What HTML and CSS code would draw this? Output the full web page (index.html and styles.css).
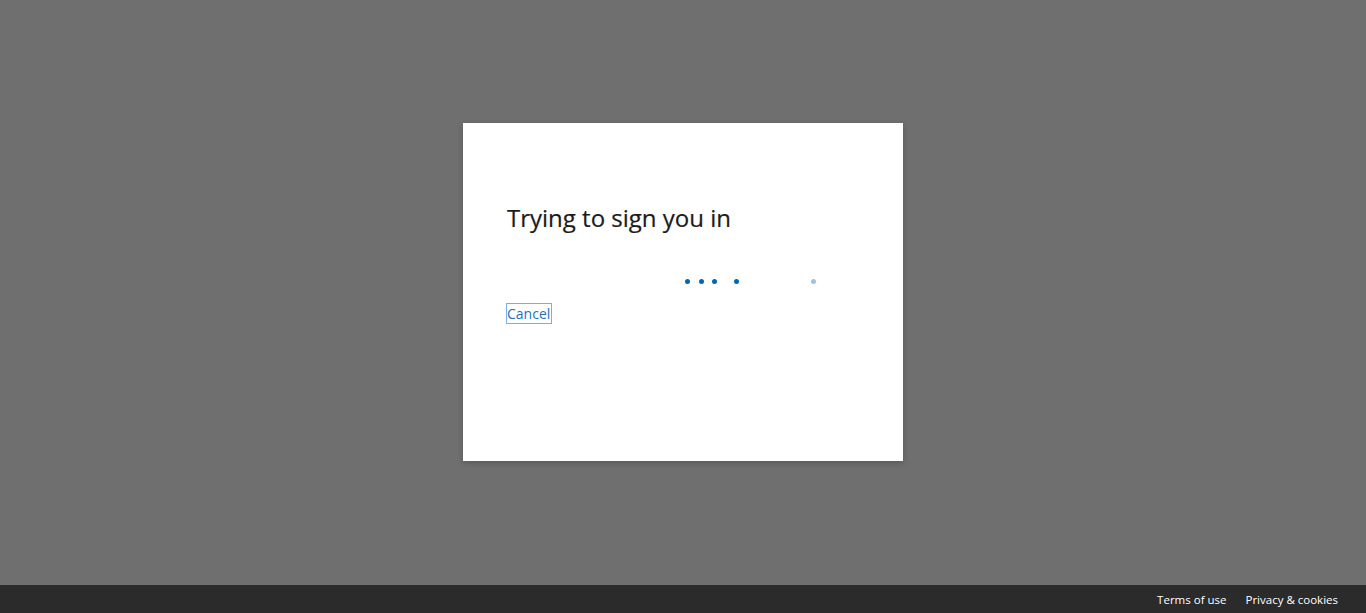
FILE: index.html
```html
<!DOCTYPE html>
<html lang="en">
<head>
<meta charset="utf-8">
<title>Sign in</title>
<link rel="stylesheet" href="styles.css">
</head>
<body>
<div class="page">
  <main class="stage">
    <section class="dialog">
      <h1 class="title">Trying to sign you in</h1>
      <div class="progress">
        <span class="dot" style="left:178px"></span>
        <span class="dot" style="left:192px"></span>
        <span class="dot" style="left:205px"></span>
        <span class="dot" style="left:227px"></span>
        <span class="dot faint" style="left:304px"></span>
      </div>
      <div class="actions"><a class="link" href="#">Cancel</a></div>
    </section>
  </main>
  <footer class="footer">
    <a class="foot-link" href="#">Terms of use</a>
    <a class="foot-link" href="#">Privacy &amp; cookies</a>
  </footer>
</div>
</body>
</html>
```
FILE: styles.css
```css
html, body {
  margin: 0;
  padding: 0;
  height: 100%;
}
body {
  font-family: "Open Sans", "Noto Sans", "Liberation Sans", sans-serif;
  background: #6f6f6f;
}
.page {
  display: flex;
  flex-direction: column;
  height: 100%;
}
.stage {
  flex: 1;
  display: flex;
  align-items: center;
  justify-content: center;
  padding-bottom: 1px;
}
.dialog {
  width: 440px;
  height: 338px;
  box-sizing: border-box;
  background: #ffffff;
  box-shadow: 0 2px 6px rgba(0, 0, 0, 0.2);
  padding: 79px 44px 0 44px;
  display: flex;
  flex-direction: column;
}
.title {
  margin: 0;
  font-size: 24px;
  line-height: 32px;
  font-weight: 500;
  color: #1b1b1b;
  -webkit-text-stroke: 0.2px #1b1b1b;
}
.progress {
  position: relative;
  height: 5px;
  margin-top: 45px;
}
.dot {
  position: absolute;
  top: 0;
  width: 5px;
  height: 5px;
  border-radius: 50%;
  background: #0067b8;
}
.dot.faint {
  background: #9fc3e4;
}
.actions {
  margin-top: 20px;
  display: flex;
}
.link {
  color: #1f6fbf;
  font-size: 14px;
  line-height: 19px;
  text-decoration: none;
  outline: 1px solid #7eaaf0;
  outline-offset: 0;
  padding: 0 1px 0 0;
}
.footer {
  height: 28px;
  background: #2b2b2b;
  display: flex;
  justify-content: flex-end;
  align-items: center;
  gap: 19px;
  padding-right: 28px;
}
.foot-link {
  color: #ffffff;
  font-size: 11.5px;
  text-decoration: none;
}
```
